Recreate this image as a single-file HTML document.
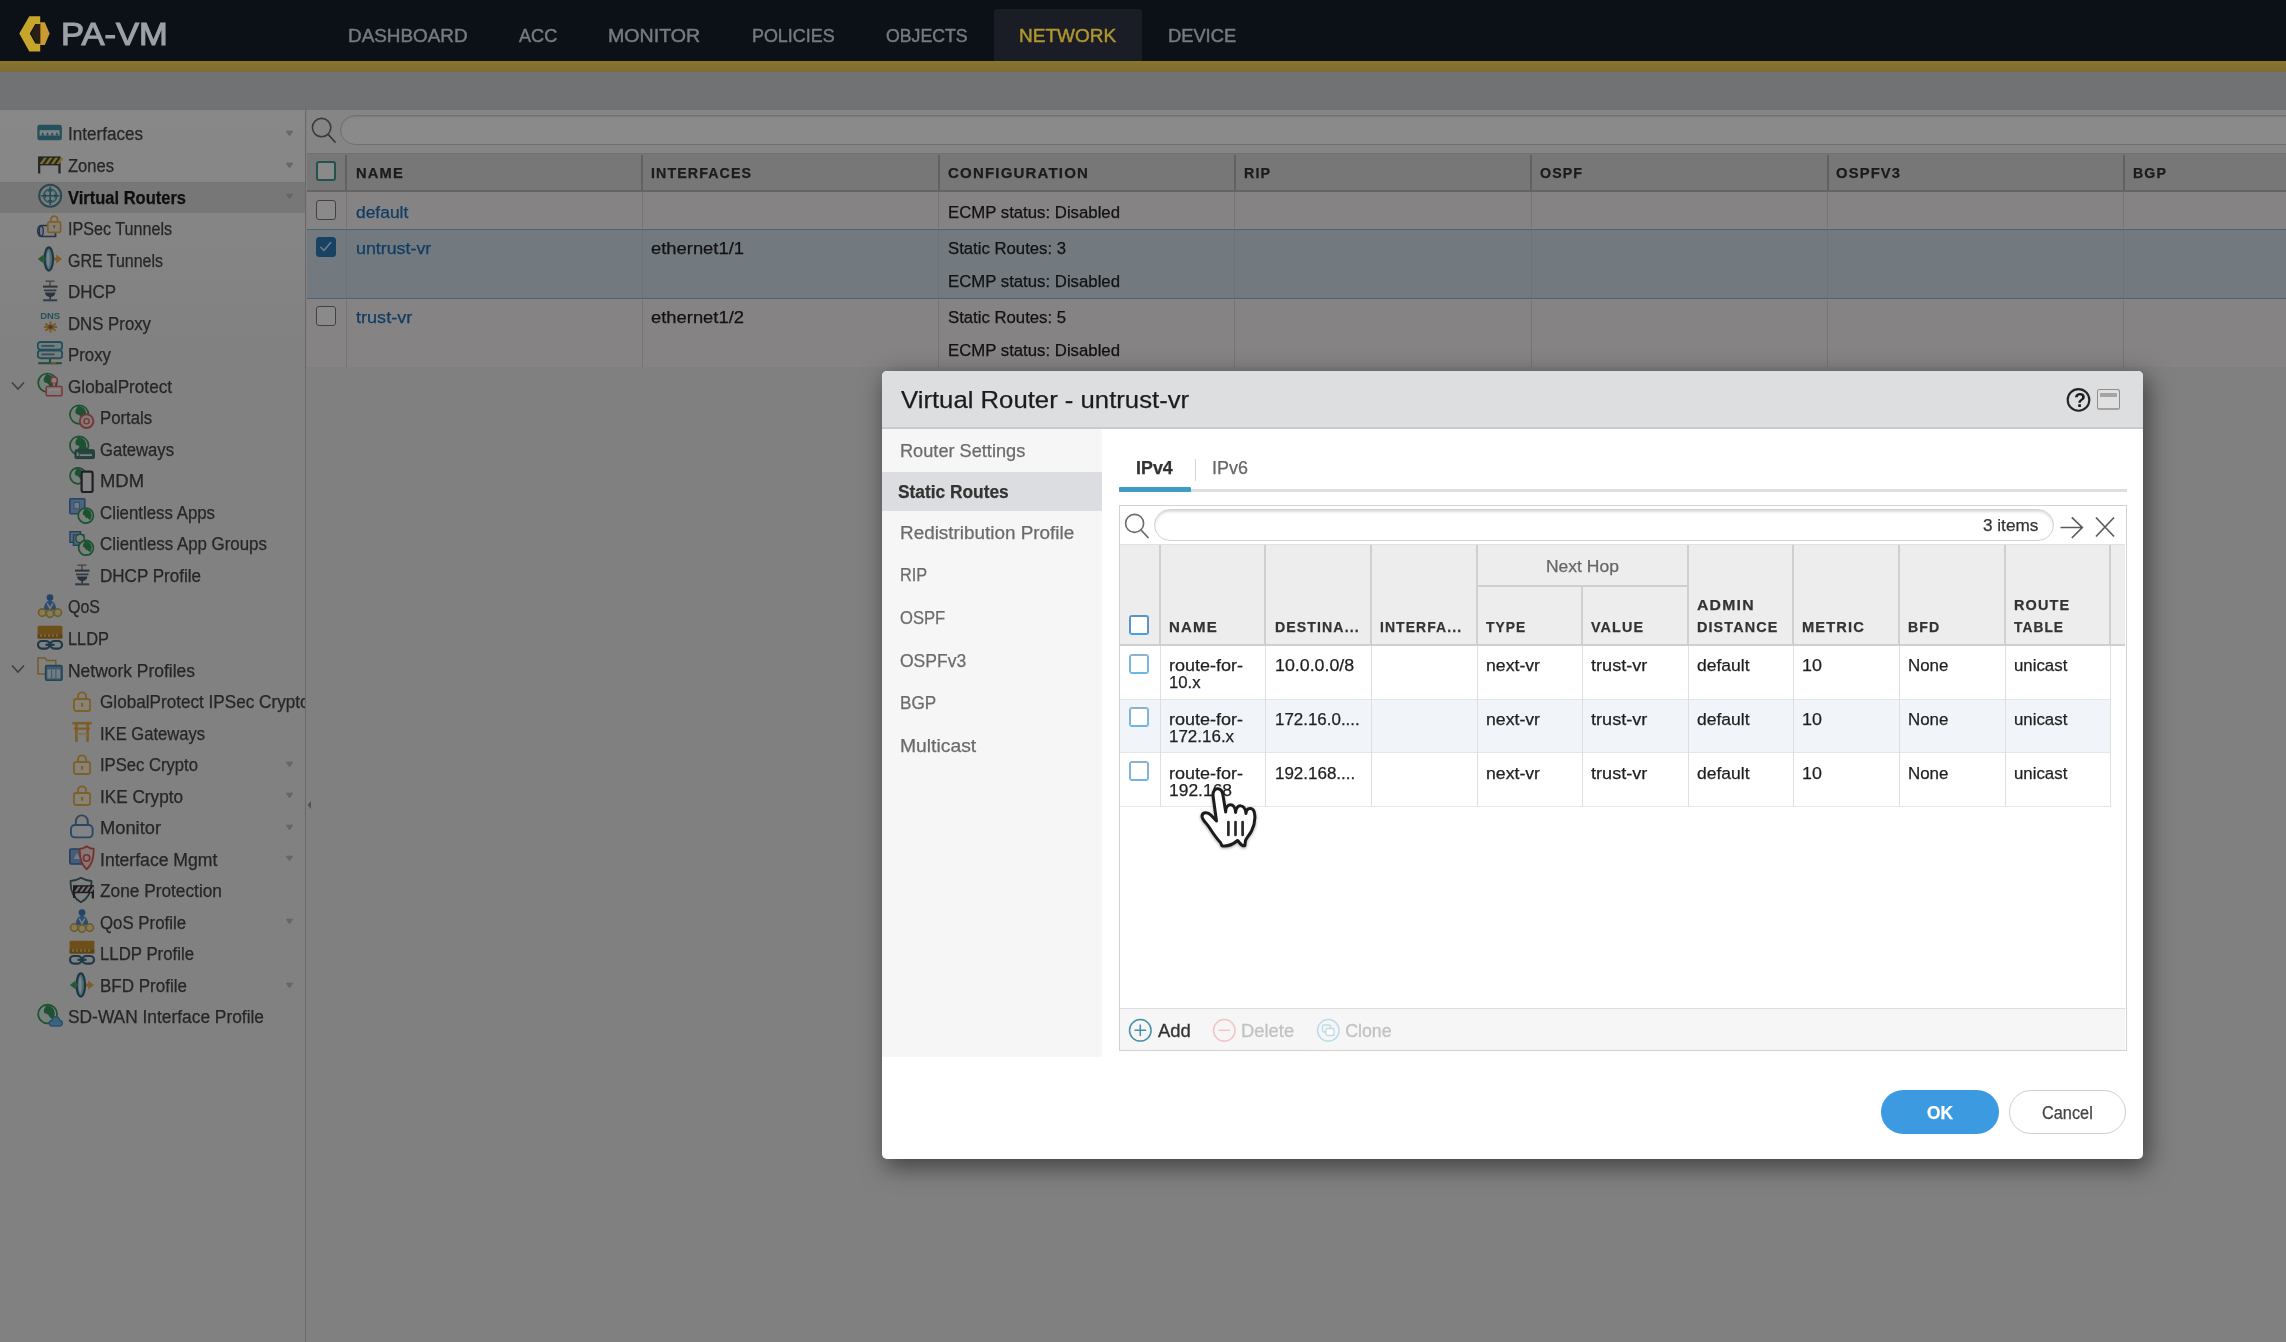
<!DOCTYPE html>
<html lang="en"><head><meta charset="utf-8"><title>PA-VM - Network - Virtual Routers</title>
<style>
html,body{margin:0;padding:0;}
body{width:2286px;height:1342px;overflow:hidden;position:relative;background:#ececec;font-family:"Liberation Sans", Arial, sans-serif;}
.layer{position:absolute;left:0;top:0;width:2286px;height:1342px;overflow:hidden;will-change:transform;}
.layer div,.layer span.cb,.layer svg{position:absolute;box-sizing:border-box;}
.t{position:absolute;white-space:nowrap;line-height:1;transform-origin:0 0;-webkit-text-stroke:0.25px;}
#sidewrap{width:305px;}
.cb{display:block;width:20px;height:20px;border-radius:3px;background:#fff;}
.cb-m{border:1.5px solid #7a7a7a;}
.cb-mh{border:2px solid #3f9a8c;}
.cb-mc{background:#2b7bb9;border:1.5px solid #2b7bb9;}
.cb-d{border:2px solid #7fb4dc;border-top-color:#8fb1cc;border-bottom-color:#6cb5e6;}
.cb-dh{border:2px solid #5b94c6;border-bottom-color:#4aa0e0;}
#mask{background:rgba(0,0,0,0.46);top:72px;height:1270px;}
</style></head>
<body>
<div class="layer" id="app">
<header>
<div style="left:0.0px;top:0.0px;width:2286.0px;height:61.0px;background:#0c1117;"></div>
<div style="left:993.6px;top:8.5px;width:148.0px;height:52.5px;background:#1a1d25;border-radius:3px 3px 0 0;"></div>
<div style="left:0.0px;top:61.0px;width:2286.0px;height:11.5px;background:linear-gradient(to bottom,#8a752c,#7c6c36);"></div>
<svg style="left:17px;top:13px" width="36" height="42" viewBox="17 13 36 42"><path d="M29.300 16.200H40.200V24H35.300L29.800 33.600 35.300 43.400H40.200V51.400H29.300L19.300 33.600z" fill="#c6a62a"/><path d="M40.200 22.200L44.800 22.200 49.600 33.600 44.800 45 40.200 45z" fill="#c99a32"/><path d="M40.200 24H36.500L31.200 33.600 36.500 43.400H40.200z" fill="#2a1f14"/></svg>
<span class="t" style="left:60.5px;top:18.7px;font-size:30.6px;color:#9da1a6;transform:scaleX(1.129);-webkit-text-stroke:1.1px #9da1a6;">PA-VM</span>
<span class="t" style="left:348.0px;top:27.4px;font-size:18.6px;color:#757b82;transform:scaleX(1.015);-webkit-text-stroke:0.45px;">DASHBOARD</span>
<span class="t" style="left:519.0px;top:27.4px;font-size:18.6px;color:#757b82;transform:scaleX(0.975);-webkit-text-stroke:0.45px;">ACC</span>
<span class="t" style="left:608.3px;top:27.4px;font-size:18.6px;color:#757b82;transform:scaleX(1.055);-webkit-text-stroke:0.45px;">MONITOR</span>
<span class="t" style="left:752.0px;top:27.4px;font-size:18.6px;color:#757b82;transform:scaleX(0.963);-webkit-text-stroke:0.45px;">POLICIES</span>
<span class="t" style="left:885.7px;top:27.4px;font-size:18.6px;color:#757b82;transform:scaleX(0.951);-webkit-text-stroke:0.45px;">OBJECTS</span>
<span class="t" style="left:1019.4px;top:27.4px;font-size:18.6px;color:#b0972e;transform:scaleX(1.022);-webkit-text-stroke:0.45px;">NETWORK</span>
<span class="t" style="left:1167.9px;top:27.4px;font-size:18.6px;color:#757b82;transform:scaleX(0.984);-webkit-text-stroke:0.45px;">DEVICE</span>
</header>
<div style="left:0.0px;top:72.0px;width:2286.0px;height:37.5px;background:#d0d3d6;"></div>
<nav class="layer" id="sidewrap">
<div style="left:0.0px;top:109.5px;width:305.0px;height:1232.5px;background:linear-gradient(to bottom,#fbfbfb 0px,#f9f9f9 70px,#efefef 230px,#eeeeee 260px);"></div>
<div style="left:0.0px;top:182.0px;width:305.0px;height:30.5px;background:#dcdcdc;"></div>
<svg style="left:37.0px;top:120.0px" width="26" height="26" viewBox="0 0 26 26" opacity="0.88"><rect x="0.3" y="4.8" width="24.6" height="15.4" rx="2.2" fill="#2b879d"/><rect x="2.6" y="10.2" width="20" height="5.4" fill="#e6f4f7"/><path d="M4.2 15.6l1.6-3.6 1.6 3.6z" fill="#2b879d"/><path d="M8.9 15.6l1.6-3.6 1.6 3.6z" fill="#2b879d"/><path d="M13.6 15.6l1.6-3.6 1.6 3.6z" fill="#2b879d"/><path d="M18.3 15.6l1.6-3.6 1.6 3.6z" fill="#2b879d"/></svg>
<svg style="left:284.500px;top:130.0px" width="9" height="7" viewBox="0 0 9 7"><path d="M1.300 1.200h6.400l-3.200 4.600z" fill="#bdbdbd" stroke="#bdbdbd" stroke-width="1" stroke-linejoin="round"/></svg>
<svg style="left:37.0px;top:151.5px" width="26" height="26" viewBox="0 0 26 26" opacity="0.88"><rect x="1" y="4.4" width="22.6" height="9" fill="#2e2e2e"/><path d="M2.5 12l4.5-6.2h3l-4.5 6.2z" fill="#e6c93a"/><path d="M8.1 12l4.5-6.2h3l-4.5 6.2z" fill="#e6c93a"/><path d="M13.7 12l4.5-6.2h3l-4.5 6.2z" fill="#e6c93a"/><path d="M19.3 12l4.5-6.2h3l-4.5 6.2z" fill="#e6c93a"/><rect x="1" y="13" width="2.3" height="8.5" fill="#2e2e2e"/><rect x="21.3" y="13" width="2.3" height="8.5" fill="#2e2e2e"/></svg>
<svg style="left:284.500px;top:161.5px" width="9" height="7" viewBox="0 0 9 7"><path d="M1.300 1.200h6.400l-3.200 4.600z" fill="#bdbdbd" stroke="#bdbdbd" stroke-width="1" stroke-linejoin="round"/></svg>
<svg style="left:37.0px;top:183.1px" width="26" height="26" viewBox="0 0 26 26" opacity="0.88"><circle cx="13.2" cy="12.8" r="11" fill="#dbe9ec" stroke="#3b7886" stroke-width="2"/><circle cx="13.2" cy="12.8" r="6.6" fill="none" stroke="#3b8c9c" stroke-width="1.4"/><path d="M13.2 3.5v18.6M3.9 12.8h18.6" stroke="#2f7f90" stroke-width="1.6"/><path d="M13.2 5.2l-2.4 3.4h4.8zM13.2 20.4l-2.4-3.4h4.8zM5.6 12.8l3.4-2.4v4.8zM20.8 12.8l-3.4-2.4v4.8z" fill="#2f7f90"/></svg>
<svg style="left:284.500px;top:193.1px" width="9" height="7" viewBox="0 0 9 7"><path d="M1.300 1.200h6.400l-3.200 4.600z" fill="#bdbdbd" stroke="#bdbdbd" stroke-width="1" stroke-linejoin="round"/></svg>
<svg style="left:37.0px;top:214.6px" width="26" height="26" viewBox="0 0 26 26" opacity="0.88"><path d="M4 10.5h14.5v11H4a3.2 5.5 0 0 1 0-11z" fill="#e9eef5" stroke="#2d4d78" stroke-width="1.7"/><ellipse cx="4.3" cy="16" rx="2" ry="5" fill="#cfd9e8" stroke="#2d4d78" stroke-width="1.3"/><path d="M13.8 7.2v-2.6a3.4 3.4 0 0 1 6.8 0v2.6" fill="none" stroke="#e8a92e" stroke-width="1.7"/><rect x="10.8" y="6.8" width="12.8" height="10.6" rx="1.8" fill="#f7ecd0" stroke="#e8a92e" stroke-width="1.7"/><path d="M16 10.2h2.4l-1.2 4z" fill="#c07b2a"/></svg>
<svg style="left:37.0px;top:246.1px" width="26" height="26" viewBox="0 0 26 26" opacity="0.88"><ellipse cx="11.8" cy="13" rx="4.2" ry="11.6" fill="#8cc8e0" stroke="#1f5668" stroke-width="2.2"/><ellipse cx="11.2" cy="13" rx="1.3" ry="8.2" fill="#e4f3f8"/><path d="M0.8 13l5.8-4.6v3.2h2v2.8h-2v3.2z" fill="#2c9a52"/><path d="M25 13l-5.8-4.6v3.2h-2.2v2.8h2.2v3.2z" fill="#e9a23b"/></svg>
<svg style="left:37.0px;top:277.7px" width="26" height="26" viewBox="0 0 26 26" opacity="0.88"><path d="M8.5 3.2h9M13 3.2v5.2" stroke="#666" stroke-width="1.3"/><path d="M6 8.6h14.5" stroke="#4a4a4a" stroke-width="2"/><path d="M7 12.4h12.4" stroke="#3f5f80" stroke-width="1.8"/><path d="M8 14.6h10.4a5.2 4.4 0 0 1 -10.4 0z" fill="#3a4a5c"/><path d="M13.2 18.5v3" stroke="#444" stroke-width="1.6"/><path d="M6.2 22.3h14" stroke="#3f5f80" stroke-width="2"/></svg>
<svg style="left:37.0px;top:309.2px" width="26" height="26" viewBox="0 0 26 26" opacity="0.88"><text x="3.2" y="10.2" font-family="Liberation Sans,sans-serif" font-size="9.5" font-weight="700" fill="#2b8a99" textLength="20" lengthAdjust="spacingAndGlyphs">DNS</text><path d="M13.5 12.4v11M8.3 14.6l10.4 7M18.7 14.6l-10.4 7M7 18h13" stroke="#dd9a3c" stroke-width="1.9"/><circle cx="13.5" cy="18" r="2.1" fill="#8a5a2c"/></svg>
<svg style="left:37.0px;top:340.8px" width="26" height="26" viewBox="0 0 26 26" opacity="0.88"><rect x="0.8" y="1" width="24.4" height="7.6" rx="2.6" fill="#d4e6ea" stroke="#2b879d" stroke-width="1.9"/><rect x="0.8" y="9.6" width="24.4" height="7.6" rx="2.6" fill="#d4e6ea" stroke="#2b879d" stroke-width="1.9"/><path d="M4.5 4.8h13M4.5 13.4h13" stroke="#5d7f88" stroke-width="1.8"/><path d="M13 17.4v3.6" stroke="#2a7c60" stroke-width="2"/><path d="M1.2 22.2h23.6" stroke="#2a8a66" stroke-width="2.2"/><path d="M14 22.2h5" stroke="#c79a3a" stroke-width="2.2"/></svg>
<svg style="left:37.0px;top:372.3px" width="26" height="26" viewBox="0 0 26 26" opacity="0.88"><circle cx="10.5" cy="10.8" r="9.3" fill="#dff0e5" stroke="#1e8a4a" stroke-width="1.7"/><path d="M9.1 2.0c8.4 0.9 10.2 8.4 7.0 14.0c-4.7 -0.9 -3.7 -5.6 -8.4 -5.6c-2.8 -3.7 0.9 -5.6 1.4 -8.4z" fill="#1e8a4a"/><circle cx="17" cy="8.2" r="3.3" fill="#fbeeee" stroke="#d9534f" stroke-width="1.5"/><path d="M15.6 11.4v3.2h2.8v-3.2" fill="#fbeeee" stroke="#d9534f" stroke-width="1.2"/><rect x="9.2" y="14.4" width="15.8" height="9.4" rx="1.2" fill="#f6e3e3" stroke="#d9534f" stroke-width="1.5"/><path d="M11.5 17.6h11" stroke="#fff" stroke-width="1.6"/></svg>
<svg style="left:68.5px;top:403.8px" width="26" height="26" viewBox="0 0 26 26" opacity="0.88"><circle cx="10.2" cy="10.6" r="9.3" fill="#dff0e5" stroke="#1e8a4a" stroke-width="1.7"/><path d="M8.8 1.8c8.4 0.9 10.2 8.4 7.0 14.0c-4.7 -0.9 -3.7 -5.6 -8.4 -5.6c-2.8 -3.7 0.9 -5.6 1.4 -8.4z" fill="#1e8a4a"/><circle cx="17.6" cy="17.2" r="6.8" fill="#f8dedd" stroke="#d9534f" stroke-width="1.9"/><circle cx="17.6" cy="17.2" r="2.6" fill="none" stroke="#d9534f" stroke-width="1.4"/></svg>
<svg style="left:68.5px;top:435.4px" width="26" height="26" viewBox="0 0 26 26" opacity="0.88"><circle cx="10.2" cy="10.6" r="9.3" fill="#dff0e5" stroke="#1e8a4a" stroke-width="1.7"/><path d="M8.8 1.8c8.4 0.9 10.2 8.4 7.0 14.0c-4.7 -0.9 -3.7 -5.6 -8.4 -5.6c-2.8 -3.7 0.9 -5.6 1.4 -8.4z" fill="#1e8a4a"/><path d="M8.5 14.5c1-4.5 8.5-5.5 10.5 0z" fill="#1e8a4a"/><rect x="6" y="14.8" width="19.4" height="8.8" rx="1.3" fill="#2f6f66" stroke="#245a54" stroke-width="1"/><path d="M8.6 17.4v3.6M10.6 20.2h12.4" stroke="#e6f2f0" stroke-width="1.8"/></svg>
<svg style="left:68.5px;top:466.9px" width="26" height="26" viewBox="0 0 26 26" opacity="0.88"><circle cx="9" cy="8.8" r="8" fill="#dff0e5" stroke="#1e8a4a" stroke-width="1.7"/><path d="M7.8 1.2c7.2 0.8 8.8 7.2 6.0 12.0c-4.0 -0.8 -3.2 -4.8 -7.2 -4.8c-2.4 -3.2 0.8 -4.8 1.2 -7.2z" fill="#1e8a4a"/><rect x="12.6" y="4.6" width="11" height="20.4" rx="1.8" fill="#f4f4f6" stroke="#23232b" stroke-width="2.2"/></svg>
<svg style="left:68.5px;top:498.4px" width="26" height="26" viewBox="0 0 26 26" opacity="0.88"><rect x="0.8" y="0.8" width="15" height="15" rx="1" fill="#7fb0e6" stroke="#2f6fb3" stroke-width="1.6"/><rect x="5" y="4.4" width="5.4" height="6.4" fill="#cfe2f7" stroke="#4b86c8" stroke-width="1"/><circle cx="16.8" cy="17.6" r="7.6" fill="#dff0e5" stroke="#1e8a4a" stroke-width="1.7"/><path d="M15.7 10.4c6.8 0.8 8.4 6.8 5.7 11.4c-3.8 -0.8 -3.0 -4.6 -6.8 -4.6c-2.3 -3.0 0.8 -4.6 1.1 -6.8z" fill="#1e8a4a"/><path d="M14.5 15.5l2.8 5 3.4-3.4" fill="#1e8a4a"/></svg>
<svg style="left:68.5px;top:530.0px" width="26" height="26" viewBox="0 0 26 26" opacity="0.88"><rect x="1" y="1.8" width="10.5" height="10.5" fill="#9cc2ea" stroke="#2d5f94" stroke-width="1.4"/><rect x="4.4" y="4.8" width="10.5" height="10.5" fill="#7fb0e6" stroke="#2f6fb3" stroke-width="1.4"/><circle cx="11" cy="8.5" r="4.2" fill="#dff0e5" stroke="#1e8a4a" stroke-width="1.4"/><circle cx="17" cy="17.8" r="7.4" fill="#dff0e5" stroke="#1e8a4a" stroke-width="1.7"/><path d="M15.9 10.8c6.7 0.7 8.1 6.7 5.6 11.1c-3.7 -0.7 -3.0 -4.4 -6.7 -4.4c-2.2 -3.0 0.7 -4.4 1.1 -6.7z" fill="#1e8a4a"/><path d="M14.8 15.6l2.6 5 3.4-3.4" fill="#1e8a4a"/></svg>
<svg style="left:68.5px;top:561.5px" width="26" height="26" viewBox="0 0 26 26" opacity="0.88"><path d="M8.5 3.2h9M13 3.2v5.2" stroke="#666" stroke-width="1.3"/><path d="M6 8.6h14.5" stroke="#4a4a4a" stroke-width="2"/><path d="M7 12.4h12.4" stroke="#3f5f80" stroke-width="1.8"/><path d="M8 14.6h10.4a5.2 4.4 0 0 1 -10.4 0z" fill="#3a4a5c"/><path d="M13.2 18.5v3" stroke="#444" stroke-width="1.6"/><path d="M6.2 22.3h14" stroke="#3f5f80" stroke-width="2"/></svg>
<svg style="left:37.0px;top:593.0px" width="26" height="26" viewBox="0 0 26 26" opacity="0.88"><circle cx="13" cy="4.6" r="3.4" fill="#2a6fb5"/><path d="M6.8 17c0-5.4 2.6-9.2 6.2-9.2s6.2 3.8 6.2 9.2z" fill="#3d82c9"/><path d="M10.2 10.4l2.8 5 2.8-5" fill="none" stroke="#d9e8f6" stroke-width="1.5"/><circle cx="5.2" cy="19.6" r="3.7" fill="#f1e6b8" stroke="#c9a227" stroke-width="1.7"/><circle cx="13" cy="20.6" r="3.7" fill="#f1e6b8" stroke="#c9a227" stroke-width="1.7"/><circle cx="20.8" cy="19.6" r="3.7" fill="#f1e6b8" stroke="#c9a227" stroke-width="1.7"/></svg>
<svg style="left:37.0px;top:624.6px" width="26" height="26" viewBox="0 0 26 26" opacity="0.88"><rect x="0.6" y="0.8" width="24.8" height="12.6" rx="1.4" fill="#c88714"/><path d="M0.6 9.6h24.8v3.8h-24.8z" fill="#a8700f"/><path d="M4 9.2v2.6M8 9.2v2.6M12 9.2v2.6M16 9.2v2.6M20 9.2v2.6" stroke="#e9c98a" stroke-width="1.5"/><rect x="1" y="16" width="11.6" height="7.6" rx="3.8" fill="none" stroke="#1f5a7a" stroke-width="2.2"/><rect x="13.4" y="16" width="11.6" height="7.6" rx="3.8" fill="none" stroke="#1f5a7a" stroke-width="2.2"/><path d="M8.5 19.8h9" stroke="#1f5a7a" stroke-width="2.2"/></svg>
<svg style="left:37.0px;top:656.1px" width="26" height="26" viewBox="0 0 26 26" opacity="0.88"><path d="M1 2h7l2 2.6h8.8v13.4h-17.8z" fill="#f7f0dc" stroke="#c9a04a" stroke-width="1.5"/><rect x="8.6" y="9.6" width="16.4" height="14.6" rx="1.2" fill="#5f9fc4" stroke="#2d6f94" stroke-width="1.6"/><rect x="10.4" y="13.4" width="12.8" height="9" fill="#d7e8f2"/><path d="M14.6 13.4v9M18.9 13.4v9" stroke="#5f9fc4" stroke-width="1.2"/></svg>
<svg style="left:68.5px;top:687.6px" width="26" height="26" viewBox="0 0 26 26" opacity="0.88"><path d="M9 11.5v-3.2a4 4 0 0 1 8 0v3.2" fill="none" stroke="#e8a92e" stroke-width="1.8"/><rect x="5" y="11.0" width="16" height="12" rx="2" fill="#fbf3de" stroke="#e8a92e" stroke-width="1.8"/><rect x="12" y="15.0" width="2.2" height="3.6" fill="#e8a92e"/></svg>
<svg style="left:68.5px;top:719.2px" width="26" height="26" viewBox="0 0 26 26" opacity="0.88"><path d="M3.4 4.2h19.2" stroke="#e8a32c" stroke-width="2.6"/><path d="M5 9.6h16" stroke="#e8a32c" stroke-width="2.2"/><path d="M7.4 4.2v18.6M18.6 4.2v18.6" stroke="#e8a32c" stroke-width="2.6"/><path d="M7.4 15h11.2" stroke="#f3c878" stroke-width="1.6"/></svg>
<svg style="left:68.5px;top:750.7px" width="26" height="26" viewBox="0 0 26 26" opacity="0.88"><path d="M9 11.5v-3.2a4 4 0 0 1 8 0v3.2" fill="none" stroke="#e8a92e" stroke-width="1.8"/><rect x="5" y="11.0" width="16" height="12" rx="2" fill="#fbf3de" stroke="#e8a92e" stroke-width="1.8"/><rect x="12" y="15.0" width="2.2" height="3.6" fill="#e8a92e"/></svg>
<svg style="left:284.500px;top:760.7px" width="9" height="7" viewBox="0 0 9 7"><path d="M1.300 1.200h6.400l-3.200 4.600z" fill="#bdbdbd" stroke="#bdbdbd" stroke-width="1" stroke-linejoin="round"/></svg>
<svg style="left:68.5px;top:782.2px" width="26" height="26" viewBox="0 0 26 26" opacity="0.88"><path d="M9 11.5v-3.2a4 4 0 0 1 8 0v3.2" fill="none" stroke="#e8a92e" stroke-width="1.8"/><rect x="5" y="11.0" width="16" height="12" rx="2" fill="#fbf3de" stroke="#e8a92e" stroke-width="1.8"/><rect x="12" y="15.0" width="2.2" height="3.6" fill="#e8a92e"/></svg>
<svg style="left:284.500px;top:792.2px" width="9" height="7" viewBox="0 0 9 7"><path d="M1.300 1.200h6.400l-3.200 4.600z" fill="#bdbdbd" stroke="#bdbdbd" stroke-width="1" stroke-linejoin="round"/></svg>
<svg style="left:68.5px;top:813.8px" width="26" height="26" viewBox="0 0 26 26" opacity="0.88"><path d="M6.8 11.6v-4.2a6 6 0 0 1 12 0v4.2" fill="none" stroke="#4a6f9a" stroke-width="1.9"/><rect x="2" y="11" width="21.6" height="12.4" rx="4" fill="#eef3f8" stroke="#3a78b5" stroke-width="1.9"/></svg>
<svg style="left:284.500px;top:823.8px" width="9" height="7" viewBox="0 0 9 7"><path d="M1.300 1.200h6.400l-3.200 4.600z" fill="#bdbdbd" stroke="#bdbdbd" stroke-width="1" stroke-linejoin="round"/></svg>
<svg style="left:68.5px;top:845.3px" width="26" height="26" viewBox="0 0 26 26" opacity="0.88"><rect x="0.8" y="4" width="15.6" height="15" rx="1.6" fill="#6fa3dc" stroke="#2d63a6" stroke-width="1.6"/><path d="M4.8 14l3.2-6 3.2 6z" fill="#dbe9f7"/><path d="M17.6 1.2c2.6 1.8 4.6 2.4 7 2.6c0.4 9-1.6 16-7 20.4c-5.2-4.4-7.2-11.4-6.8-20.4c2.2-0.2 4.4-0.8 6.800-2.600z" fill="#f7dcdc" stroke="#d9433f" stroke-width="1.8"/><circle cx="17.6" cy="13" r="3.2" fill="none" stroke="#d9433f" stroke-width="1.6"/></svg>
<svg style="left:284.500px;top:855.3px" width="9" height="7" viewBox="0 0 9 7"><path d="M1.300 1.200h6.400l-3.200 4.600z" fill="#bdbdbd" stroke="#bdbdbd" stroke-width="1" stroke-linejoin="round"/></svg>
<svg style="left:68.5px;top:876.9px" width="26" height="26" viewBox="0 0 26 26" opacity="0.88"><path d="M12 0.8c3.6 2.2 6.8 3 10.4 3.200c0.400 9.600-2.400 17-10.400 21.200c-8-4.200-10.800-11.600-10.400-21.200c3.600-0.200 6.800-1 10.400-3.200z" fill="#e8eef0" stroke="#2f4f55" stroke-width="1.8"/><rect x="4" y="8.200" width="21" height="8" fill="#1d1d1d"/><path d="M5.5 14.8l3.6-5.2h2.6l-3.6 5.2z" fill="#cfcfcf"/><path d="M10.5 14.8l3.6-5.2h2.6l-3.6 5.2z" fill="#cfcfcf"/><path d="M15.5 14.8l3.6-5.2h2.6l-3.6 5.2z" fill="#cfcfcf"/><path d="M20.5 14.8l3.6-5.2h2.6l-3.6 5.2z" fill="#cfcfcf"/><rect x="4" y="16" width="2.200" height="5" fill="#1d1d1d"/><rect x="22.8" y="16" width="2.200" height="5.500" fill="#1d1d1d"/></svg>
<svg style="left:68.5px;top:908.4px" width="26" height="26" viewBox="0 0 26 26" opacity="0.88"><circle cx="13" cy="4.6" r="3.4" fill="#2a6fb5"/><path d="M6.8 17c0-5.4 2.6-9.2 6.2-9.2s6.2 3.8 6.2 9.2z" fill="#3d82c9"/><path d="M10.2 10.4l2.8 5 2.8-5" fill="none" stroke="#d9e8f6" stroke-width="1.5"/><circle cx="5.2" cy="19.6" r="3.7" fill="#f1e6b8" stroke="#c9a227" stroke-width="1.7"/><circle cx="13" cy="20.6" r="3.7" fill="#f1e6b8" stroke="#c9a227" stroke-width="1.7"/><circle cx="20.8" cy="19.6" r="3.7" fill="#f1e6b8" stroke="#c9a227" stroke-width="1.7"/></svg>
<svg style="left:284.500px;top:918.4px" width="9" height="7" viewBox="0 0 9 7"><path d="M1.300 1.200h6.400l-3.200 4.600z" fill="#bdbdbd" stroke="#bdbdbd" stroke-width="1" stroke-linejoin="round"/></svg>
<svg style="left:68.5px;top:939.9px" width="26" height="26" viewBox="0 0 26 26" opacity="0.88"><rect x="0.6" y="0.8" width="24.8" height="12.6" rx="1.4" fill="#c88714"/><path d="M0.6 9.6h24.8v3.8h-24.8z" fill="#a8700f"/><path d="M4 9.2v2.6M8 9.2v2.6M12 9.2v2.6M16 9.2v2.6M20 9.2v2.6" stroke="#e9c98a" stroke-width="1.5"/><rect x="1" y="16" width="11.6" height="7.6" rx="3.8" fill="none" stroke="#1f5a7a" stroke-width="2.2"/><rect x="13.4" y="16" width="11.6" height="7.6" rx="3.8" fill="none" stroke="#1f5a7a" stroke-width="2.2"/><path d="M8.5 19.8h9" stroke="#1f5a7a" stroke-width="2.2"/></svg>
<svg style="left:68.5px;top:971.5px" width="26" height="26" viewBox="0 0 26 26" opacity="0.88"><ellipse cx="11.8" cy="13" rx="4.2" ry="11.6" fill="#8cc8e0" stroke="#1f5668" stroke-width="2.2"/><ellipse cx="11.2" cy="13" rx="1.3" ry="8.2" fill="#e4f3f8"/><path d="M0.8 13l5.8-4.6v3.2h2v2.8h-2v3.2z" fill="#2c9a52"/><path d="M25 13l-5.8-4.6v3.2h-2.2v2.8h2.2v3.2z" fill="#e9a23b"/></svg>
<svg style="left:284.500px;top:981.5px" width="9" height="7" viewBox="0 0 9 7"><path d="M1.300 1.200h6.400l-3.200 4.600z" fill="#bdbdbd" stroke="#bdbdbd" stroke-width="1" stroke-linejoin="round"/></svg>
<svg style="left:37.0px;top:1003.0px" width="26" height="26" viewBox="0 0 26 26" opacity="0.88"><circle cx="10.6" cy="11" r="9.4" fill="#dff0e5" stroke="#1e8a4a" stroke-width="1.7"/><path d="M9.2 2.1c8.5 0.9 10.3 8.5 7.1 14.1c-4.7 -0.9 -3.8 -5.6 -8.5 -5.6c-2.8 -3.8 0.9 -5.6 1.4 -8.5z" fill="#1e8a4a"/><path d="M15 17.500a3.800 3.800 0 0 1 7.600 0a2.800 2.800 0 0 1 0 5.600h-7.600a2.800 2.800 0 0 1 0-5.600z" fill="#5fb0e0" stroke="#2f86c0" stroke-width="1.400"/></svg>
<svg style="left:10px;top:379.5px" width="16" height="12" viewBox="0 0 16 12"><path d="M2 2.5l6 6.5 6-6.5" fill="none" stroke="#777" stroke-width="1.6"/></svg>
<svg style="left:10px;top:663.0px" width="16" height="12" viewBox="0 0 16 12"><path d="M2 2.5l6 6.5 6-6.5" fill="none" stroke="#777" stroke-width="1.6"/></svg>
<span class="t" style="left:68.0px;top:126.4px;font-size:17.6px;color:#464646;transform:scaleX(0.971);">Interfaces</span>
<span class="t" style="left:68.0px;top:157.9px;font-size:17.6px;color:#464646;transform:scaleX(0.941);">Zones</span>
<span class="t" style="left:68.0px;top:189.5px;font-size:17.6px;color:#1a1a1a;font-weight:700;transform:scaleX(0.938);">Virtual Routers</span>
<span class="t" style="left:68.0px;top:221.0px;font-size:17.6px;color:#464646;transform:scaleX(0.917);">IPSec Tunnels</span>
<span class="t" style="left:68.0px;top:252.5px;font-size:17.6px;color:#464646;transform:scaleX(0.908);">GRE Tunnels</span>
<span class="t" style="left:68.0px;top:284.1px;font-size:17.6px;color:#464646;transform:scaleX(0.963);">DHCP</span>
<span class="t" style="left:68.0px;top:315.6px;font-size:17.6px;color:#464646;transform:scaleX(0.954);">DNS Proxy</span>
<span class="t" style="left:68.0px;top:347.2px;font-size:17.6px;color:#464646;transform:scaleX(0.956);">Proxy</span>
<span class="t" style="left:68.0px;top:378.7px;font-size:17.6px;color:#464646;transform:scaleX(0.976);">GlobalProtect</span>
<span class="t" style="left:100.0px;top:410.2px;font-size:17.6px;color:#464646;transform:scaleX(0.950);">Portals</span>
<span class="t" style="left:100.0px;top:441.8px;font-size:17.6px;color:#464646;transform:scaleX(0.946);">Gateways</span>
<span class="t" style="left:100.0px;top:473.3px;font-size:17.6px;color:#464646;transform:scaleX(1.047);">MDM</span>
<span class="t" style="left:100.0px;top:504.8px;font-size:17.6px;color:#464646;transform:scaleX(0.956);">Clientless Apps</span>
<span class="t" style="left:100.0px;top:536.4px;font-size:17.6px;color:#464646;transform:scaleX(0.959);">Clientless App Groups</span>
<span class="t" style="left:100.0px;top:567.9px;font-size:17.6px;color:#464646;transform:scaleX(0.968);">DHCP Profile</span>
<span class="t" style="left:68.0px;top:599.4px;font-size:17.6px;color:#464646;transform:scaleX(0.909);">QoS</span>
<span class="t" style="left:68.0px;top:631.0px;font-size:17.6px;color:#464646;transform:scaleX(0.931);">LLDP</span>
<span class="t" style="left:68.0px;top:662.5px;font-size:17.6px;color:#464646;transform:scaleX(0.991);">Network Profiles</span>
<span class="t" style="left:100.0px;top:694.0px;font-size:17.6px;color:#464646;transform:scaleX(0.974);">GlobalProtect IPSec Crypto</span>
<span class="t" style="left:100.0px;top:725.6px;font-size:17.6px;color:#464646;transform:scaleX(0.942);">IKE Gateways</span>
<span class="t" style="left:100.0px;top:757.1px;font-size:17.6px;color:#464646;transform:scaleX(0.945);">IPSec Crypto</span>
<span class="t" style="left:100.0px;top:788.7px;font-size:17.6px;color:#464646;transform:scaleX(0.976);">IKE Crypto</span>
<span class="t" style="left:100.0px;top:820.2px;font-size:17.6px;color:#464646;transform:scaleX(1.040);">Monitor</span>
<span class="t" style="left:100.0px;top:851.7px;font-size:17.6px;color:#464646;">Interface Mgmt</span>
<span class="t" style="left:100.0px;top:883.3px;font-size:17.6px;color:#464646;transform:scaleX(0.982);">Zone Protection</span>
<span class="t" style="left:100.0px;top:914.8px;font-size:17.6px;color:#464646;transform:scaleX(0.956);">QoS Profile</span>
<span class="t" style="left:100.0px;top:946.3px;font-size:17.6px;color:#464646;transform:scaleX(0.955);">LLDP Profile</span>
<span class="t" style="left:100.0px;top:977.9px;font-size:17.6px;color:#464646;transform:scaleX(0.967);">BFD Profile</span>
<span class="t" style="left:68.0px;top:1009.4px;font-size:17.6px;color:#464646;transform:scaleX(0.986);">SD-WAN Interface Profile</span>
</nav>
<div style="left:305.0px;top:109.5px;width:1.0px;height:1232.5px;background:#c2c2c2;"></div>
<svg style="left:305px;top:799px" width="8" height="12" viewBox="0 0 8 12"><path d="M6 2L2.5 6 6 10z" fill="#9a9a9a"/></svg>
<main>
<div style="left:306.5px;top:109.5px;width:1979.5px;height:43.5px;background:#f8f6f7;"></div>
<svg style="left:309px;top:115px" width="30" height="30" viewBox="0 0 30 30"><circle cx="12.6" cy="12.6" r="9.2" fill="none" stroke="#6d6d6d" stroke-width="1.6"/><path d="M19.2 19.4L26 27" stroke="#6d6d6d" stroke-width="1.8" stroke-linecap="round"/></svg>
<div style="left:340.0px;top:115.0px;width:1990.0px;height:30.0px;background:#fff;border:1.5px solid #cfcfcf;border-radius:15px;box-shadow:inset 0 1px 2px rgba(0,0,0,.12);"></div>
<div style="left:306.5px;top:153.0px;width:1979.5px;height:39.0px;background:#dcdcdc;border-bottom:2px solid #b9b9b9;border-top:1px solid #d0d0d0;"></div>
<div style="left:345.0px;top:155.0px;width:2.0px;height:35.0px;background:#b4b4b4;"></div>
<div style="left:641.3px;top:155.0px;width:2.0px;height:35.0px;background:#b4b4b4;"></div>
<div style="left:937.6px;top:155.0px;width:2.0px;height:35.0px;background:#b4b4b4;"></div>
<div style="left:1233.9px;top:155.0px;width:2.0px;height:35.0px;background:#b4b4b4;"></div>
<div style="left:1530.2px;top:155.0px;width:2.0px;height:35.0px;background:#b4b4b4;"></div>
<div style="left:1826.5px;top:155.0px;width:2.0px;height:35.0px;background:#b4b4b4;"></div>
<div style="left:2122.8px;top:155.0px;width:2.0px;height:35.0px;background:#b4b4b4;"></div>
<div style="left:306.5px;top:192.0px;width:1979.5px;height:37.0px;background:#f5f3f4;"></div>
<div style="left:306.5px;top:228.5px;width:1979.5px;height:70.5px;background:#d2dfeb;border-top:1.5px solid #8db8d8;border-bottom:1.5px solid #8db8d8;"></div>
<div style="left:306.5px;top:299.0px;width:1979.5px;height:68.0px;background:#f5f3f4;"></div>
<div style="left:345.5px;top:192.0px;width:1.0px;height:36.0px;background:#d9d9d9;"></div>
<div style="left:345.5px;top:230.0px;width:1.0px;height:68.0px;background:#c6d3df;"></div>
<div style="left:345.5px;top:300.0px;width:1.0px;height:67.0px;background:#d9d9d9;"></div>
<div style="left:641.8px;top:192.0px;width:1.0px;height:36.0px;background:#d9d9d9;"></div>
<div style="left:641.8px;top:230.0px;width:1.0px;height:68.0px;background:#c6d3df;"></div>
<div style="left:641.8px;top:300.0px;width:1.0px;height:67.0px;background:#d9d9d9;"></div>
<div style="left:938.1px;top:192.0px;width:1.0px;height:36.0px;background:#d9d9d9;"></div>
<div style="left:938.1px;top:230.0px;width:1.0px;height:68.0px;background:#c6d3df;"></div>
<div style="left:938.1px;top:300.0px;width:1.0px;height:67.0px;background:#d9d9d9;"></div>
<div style="left:1234.4px;top:192.0px;width:1.0px;height:36.0px;background:#d9d9d9;"></div>
<div style="left:1234.4px;top:230.0px;width:1.0px;height:68.0px;background:#c6d3df;"></div>
<div style="left:1234.4px;top:300.0px;width:1.0px;height:67.0px;background:#d9d9d9;"></div>
<div style="left:1530.7px;top:192.0px;width:1.0px;height:36.0px;background:#d9d9d9;"></div>
<div style="left:1530.7px;top:230.0px;width:1.0px;height:68.0px;background:#c6d3df;"></div>
<div style="left:1530.7px;top:300.0px;width:1.0px;height:67.0px;background:#d9d9d9;"></div>
<div style="left:1827.0px;top:192.0px;width:1.0px;height:36.0px;background:#d9d9d9;"></div>
<div style="left:1827.0px;top:230.0px;width:1.0px;height:68.0px;background:#c6d3df;"></div>
<div style="left:1827.0px;top:300.0px;width:1.0px;height:67.0px;background:#d9d9d9;"></div>
<div style="left:2123.3px;top:192.0px;width:1.0px;height:36.0px;background:#d9d9d9;"></div>
<div style="left:2123.3px;top:230.0px;width:1.0px;height:68.0px;background:#c6d3df;"></div>
<div style="left:2123.3px;top:300.0px;width:1.0px;height:67.0px;background:#d9d9d9;"></div>
<span class="cb cb-mh" style="left:316.0px;top:160.5px"></span>
<span class="cb cb-m" style="left:316.0px;top:200.0px"></span>
<span class="cb cb-mc" style="left:316px;top:236.5px"><svg style="left:0;top:0" width="17" height="17" viewBox="0 0 20 20"><path d="M4 10.5l4.2 4.2L16.5 5" fill="none" stroke="#dfeaf5" stroke-width="1.8"/></svg></span>
<span class="cb cb-m" style="left:316.0px;top:305.5px"></span>
<span class="t" style="left:355.7px;top:165.3px;font-size:15.5px;color:#333;font-weight:700;letter-spacing:1.2px;transform:scaleX(0.950);">NAME</span>
<span class="t" style="left:651.0px;top:165.3px;font-size:15.5px;color:#333;font-weight:700;letter-spacing:1.2px;transform:scaleX(0.918);">INTERFACES</span>
<span class="t" style="left:948.0px;top:165.3px;font-size:15.5px;color:#333;font-weight:700;letter-spacing:1.2px;transform:scaleX(0.971);">CONFIGURATION</span>
<span class="t" style="left:1244.0px;top:165.3px;font-size:15.5px;color:#333;font-weight:700;letter-spacing:1.2px;transform:scaleX(0.920);">RIP</span>
<span class="t" style="left:1540.0px;top:165.3px;font-size:15.5px;color:#333;font-weight:700;letter-spacing:1.2px;transform:scaleX(0.917);">OSPF</span>
<span class="t" style="left:1836.0px;top:165.3px;font-size:15.5px;color:#333;font-weight:700;letter-spacing:1.2px;transform:scaleX(0.953);">OSPFV3</span>
<span class="t" style="left:2133.0px;top:165.3px;font-size:15.5px;color:#333;font-weight:700;letter-spacing:1.2px;transform:scaleX(0.917);">BGP</span>
<span class="t" style="left:355.7px;top:203.5px;font-size:17.2px;color:#1f6fb5;transform:scaleX(1.013);">default</span>
<span class="t" style="left:355.7px;top:239.5px;font-size:17.2px;color:#1f6fb5;transform:scaleX(1.037);">untrust-vr</span>
<span class="t" style="left:355.7px;top:309.0px;font-size:17.2px;color:#1f6fb5;transform:scaleX(1.053);">trust-vr</span>
<span class="t" style="left:651.0px;top:239.5px;font-size:17.2px;color:#222;transform:scaleX(1.069);">ethernet1/1</span>
<span class="t" style="left:651.0px;top:309.0px;font-size:17.2px;color:#222;transform:scaleX(1.069);">ethernet1/2</span>
<span class="t" style="left:948.0px;top:203.5px;font-size:17.2px;color:#222;transform:scaleX(0.975);">ECMP status: Disabled</span>
<span class="t" style="left:948.0px;top:239.5px;font-size:17.2px;color:#222;transform:scaleX(0.973);">Static Routes: 3</span>
<span class="t" style="left:948.0px;top:273.0px;font-size:17.2px;color:#222;transform:scaleX(0.975);">ECMP status: Disabled</span>
<span class="t" style="left:948.0px;top:309.0px;font-size:17.2px;color:#222;transform:scaleX(0.973);">Static Routes: 5</span>
<span class="t" style="left:948.0px;top:342.0px;font-size:17.2px;color:#222;transform:scaleX(0.975);">ECMP status: Disabled</span>
</main>
</div>
<div class="layer" id="mask"></div>
<div class="layer" id="dlg">
<div style="left:881.5px;top:371.0px;width:1261.0px;height:787.5px;background:#fff;border-radius:5px;box-shadow:4px 7px 24px 1px rgba(0,0,0,.5);"></div>
<div style="left:881.5px;top:371.0px;width:1261.0px;height:57.5px;background:#dddedf;border-radius:5px 5px 0 0;border-bottom:2px solid #c9cacb;"></div>
<svg style="left:2065px;top:386px" width="28" height="28" viewBox="0 0 28 28"><circle cx="13.500" cy="13.900" r="10.800" fill="none" stroke="#242424" stroke-width="2.100"/></svg>
<span class="t" style="left:2073.900px;top:391.300px;font-size:19.500px;font-weight:700;color:#1b1b1b;-webkit-text-stroke:0">?</span>
<div style="left:2096.8px;top:389.3px;width:23.4px;height:21.0px;background:#e0e0e1;border:1.8px solid #8e8e8e;border-bottom:2.6px solid #a2a2a2;border-radius:2.5px;"></div>
<div style="left:2100.0px;top:393.0px;width:17.2px;height:4.0px;background:#a4a4a4;"></div>
<div style="left:881.5px;top:429.0px;width:220.5px;height:628.0px;background:#f6f6f6;"></div>
<div style="left:881.5px;top:472.0px;width:220.5px;height:38.5px;background:#dcdde0;"></div>
<div style="left:1118.5px;top:489.0px;width:1008.0px;height:3.0px;background:#dedede;"></div>
<div style="left:1118.5px;top:487.0px;width:72.9px;height:5.0px;background:#3e9cc6;border-radius:1px;"></div>
<div style="left:1195.2px;top:459.0px;width:1.2px;height:22.0px;background:#d4d4d4;"></div>
<div style="left:1118.5px;top:504.5px;width:1008.0px;height:546.0px;background:#fff;border:1.5px solid #d2d2d2;"></div>
<svg style="left:1122px;top:510px" width="30" height="30" viewBox="0 0 30 30"><circle cx="12.6" cy="13.4" r="9" fill="none" stroke="#6a6a6a" stroke-width="1.6"/><path d="M19 20L26 27.5" stroke="#6a6a6a" stroke-width="1.8" stroke-linecap="round"/></svg>
<div style="left:1153.7px;top:509.3px;width:900.6px;height:31.3px;background:#fff;border:1.5px solid #d3d3d3;border-radius:16px;box-shadow:inset 0 2px 2.5px rgba(0,0,0,.14);"></div>
<svg style="left:2058px;top:514px" width="60" height="26" viewBox="0 0 60 26"><path d="M2.500 13.500h21.500M13.800 3.300l10.500 10.200-10.500 10.500" fill="none" stroke="#5b5b5b" stroke-width="1.7"/><path d="M38 3.5l18 19M56 3.5l-18 19" fill="none" stroke="#5b5b5b" stroke-width="1.7"/></svg>
<div style="left:1120.0px;top:543.5px;width:1005.0px;height:102.5px;background:#ededed;border-bottom:2px solid #cfcfcf;border-top:1px solid #e2e2e2;"></div>
<div style="left:1159.0px;top:545.0px;width:2.0px;height:99.0px;background:#cfcfcf;"></div>
<div style="left:1264.0px;top:545.0px;width:2.0px;height:99.0px;background:#cfcfcf;"></div>
<div style="left:1370.0px;top:545.0px;width:2.0px;height:99.0px;background:#cfcfcf;"></div>
<div style="left:1476.0px;top:545.0px;width:2.0px;height:99.0px;background:#cfcfcf;"></div>
<div style="left:1581.0px;top:587.0px;width:2.0px;height:57.0px;background:#cfcfcf;"></div>
<div style="left:1687.0px;top:545.0px;width:2.0px;height:99.0px;background:#cfcfcf;"></div>
<div style="left:1792.0px;top:545.0px;width:2.0px;height:99.0px;background:#cfcfcf;"></div>
<div style="left:1898.0px;top:545.0px;width:2.0px;height:99.0px;background:#cfcfcf;"></div>
<div style="left:2004.0px;top:545.0px;width:2.0px;height:99.0px;background:#cfcfcf;"></div>
<div style="left:2109.0px;top:545.0px;width:2.0px;height:99.0px;background:#cfcfcf;"></div>
<div style="left:1476.6px;top:585.0px;width:211.2px;height:2.0px;background:#cfcfcf;"></div>
<div style="left:1120.0px;top:698.7px;width:990.5px;height:53.7px;background:#f1f5f9;"></div>
<div style="left:1120.0px;top:699.0px;width:990.5px;height:1.0px;background:#e6e6e6;"></div>
<div style="left:1120.0px;top:752.0px;width:990.5px;height:1.0px;background:#e6e6e6;"></div>
<div style="left:1120.0px;top:806.0px;width:990.5px;height:1.0px;background:#e6e6e6;"></div>
<div style="left:1159.5px;top:646.0px;width:1.0px;height:160.0px;background:#dfdfdf;"></div>
<div style="left:1264.5px;top:646.0px;width:1.0px;height:160.0px;background:#dfdfdf;"></div>
<div style="left:1370.5px;top:646.0px;width:1.0px;height:160.0px;background:#dfdfdf;"></div>
<div style="left:1476.5px;top:646.0px;width:1.0px;height:160.0px;background:#dfdfdf;"></div>
<div style="left:1581.5px;top:646.0px;width:1.0px;height:160.0px;background:#dfdfdf;"></div>
<div style="left:1687.5px;top:646.0px;width:1.0px;height:160.0px;background:#dfdfdf;"></div>
<div style="left:1792.5px;top:646.0px;width:1.0px;height:160.0px;background:#dfdfdf;"></div>
<div style="left:1898.5px;top:646.0px;width:1.0px;height:160.0px;background:#dfdfdf;"></div>
<div style="left:2004.5px;top:646.0px;width:1.0px;height:160.0px;background:#dfdfdf;"></div>
<div style="left:2109.5px;top:646.0px;width:1.0px;height:160.0px;background:#dfdfdf;"></div>
<span class="cb cb-dh" style="left:1129.3px;top:614.5px"></span>
<span class="cb cb-d" style="left:1129.3px;top:654.2px"></span>
<span class="cb cb-d" style="left:1129.3px;top:707.4px"></span>
<span class="cb cb-d" style="left:1129.3px;top:761.1px"></span>
<div style="left:1120.0px;top:1008.0px;width:1005.0px;height:41.5px;background:#f6f6f6;border-top:1.5px solid #dedede;"></div>
<svg style="left:1127px;top:1017px" width="27" height="27" viewBox="0 0 27 27"><circle cx="13.3" cy="13.3" r="10.8" fill="none" stroke="#4a8fa8" stroke-width="1.5"/><path d="M13.3 7.5v11.6M7.5 13.3h11.6" stroke="#4a8fa8" stroke-width="1.5"/></svg>
<svg style="left:1211px;top:1017px" width="27" height="27" viewBox="0 0 27 27"><circle cx="13.3" cy="13.3" r="10.8" fill="none" stroke="#f0c4c8" stroke-width="1.5"/><path d="M7.5 13.3h11.6" stroke="#f0c4c8" stroke-width="1.5"/></svg>
<svg style="left:1315px;top:1017px" width="27" height="27" viewBox="0 0 27 27"><circle cx="13.3" cy="13.3" r="10.8" fill="none" stroke="#bcdde8" stroke-width="1.5"/><rect x="7.5" y="8" width="8" height="7" rx="1.5" fill="none" stroke="#bcdde8" stroke-width="1.4"/><rect x="11" y="11.5" width="8" height="7" rx="1.5" fill="#fff" stroke="#bcdde8" stroke-width="1.4"/></svg>
<div style="left:1880.7px;top:1089.5px;width:118.0px;height:44.0px;background:#3c9be0;border-radius:22px;"></div>
<div style="left:2008.5px;top:1089.5px;width:117.1px;height:44.0px;background:#fff;border:1.5px solid #d0d0d0;border-radius:22px;"></div>
<span class="t" style="left:900.6px;top:387.6px;font-size:24.3px;color:#1c1c1c;transform:scaleX(1.058);">Virtual Router - untrust-vr</span>
<span class="t" style="left:899.8px;top:441.7px;font-size:18.3px;color:#6b6b6b;transform:scaleX(0.994);">Router Settings</span>
<span class="t" style="left:897.7px;top:482.9px;font-size:18.3px;color:#333;font-weight:700;transform:scaleX(0.948);">Static Routes</span>
<span class="t" style="left:899.8px;top:524.0px;font-size:18.3px;color:#6b6b6b;transform:scaleX(1.033);">Redistribution Profile</span>
<span class="t" style="left:899.8px;top:566.0px;font-size:18.3px;color:#6b6b6b;transform:scaleX(0.892);">RIP</span>
<span class="t" style="left:899.8px;top:608.5px;font-size:18.3px;color:#6b6b6b;transform:scaleX(0.908);">OSPF</span>
<span class="t" style="left:899.8px;top:651.5px;font-size:18.3px;color:#6b6b6b;transform:scaleX(0.958);">OSPFv3</span>
<span class="t" style="left:899.8px;top:694.0px;font-size:18.3px;color:#6b6b6b;transform:scaleX(0.938);">BGP</span>
<span class="t" style="left:899.8px;top:736.5px;font-size:18.3px;color:#6b6b6b;transform:scaleX(1.056);">Multicast</span>
<span class="t" style="left:1136.2px;top:459.2px;font-size:18.3px;color:#333;font-weight:700;transform:scaleX(0.978);">IPv4</span>
<span class="t" style="left:1212.4px;top:459.2px;font-size:18.3px;color:#666;transform:scaleX(0.981);">IPv6</span>
<span class="t" style="left:1983.0px;top:517.4px;font-size:17px;color:#333;transform:scaleX(1.009);">3 items</span>
<span class="t" style="left:1546.3px;top:557.9px;font-size:17.2px;color:#666;transform:scaleX(1.017);">Next Hop</span>
<span class="t" style="left:1168.9px;top:619.2px;font-size:15.5px;color:#333;font-weight:700;letter-spacing:1.2px;transform:scaleX(0.969);">NAME</span>
<span class="t" style="left:1274.8px;top:619.2px;font-size:15.5px;color:#333;font-weight:700;letter-spacing:1.2px;transform:scaleX(0.911);">DESTINA...</span>
<span class="t" style="left:1380.0px;top:619.2px;font-size:15.5px;color:#333;font-weight:700;letter-spacing:1.2px;transform:scaleX(0.900);">INTERFA...</span>
<span class="t" style="left:1486.0px;top:619.2px;font-size:15.5px;color:#333;font-weight:700;letter-spacing:1.2px;transform:scaleX(0.891);">TYPE</span>
<span class="t" style="left:1591.0px;top:619.2px;font-size:15.5px;color:#333;font-weight:700;letter-spacing:1.2px;transform:scaleX(0.925);">VALUE</span>
<span class="t" style="left:1696.7px;top:597.2px;font-size:15.5px;color:#333;font-weight:700;letter-spacing:1.2px;transform:scaleX(1.018);">ADMIN</span>
<span class="t" style="left:1696.7px;top:619.2px;font-size:15.5px;color:#333;font-weight:700;letter-spacing:1.2px;transform:scaleX(0.928);">DISTANCE</span>
<span class="t" style="left:1802.3px;top:619.2px;font-size:15.5px;color:#333;font-weight:700;letter-spacing:1.2px;transform:scaleX(0.946);">METRIC</span>
<span class="t" style="left:1908.0px;top:619.2px;font-size:15.5px;color:#333;font-weight:700;letter-spacing:1.2px;transform:scaleX(0.910);">BFD</span>
<span class="t" style="left:2013.6px;top:597.2px;font-size:15.5px;color:#333;font-weight:700;letter-spacing:1.2px;transform:scaleX(0.933);">ROUTE</span>
<span class="t" style="left:2013.6px;top:619.2px;font-size:15.5px;color:#333;font-weight:700;letter-spacing:1.2px;transform:scaleX(0.886);">TABLE</span>
<span class="t" style="left:1168.9px;top:657.1px;font-size:17.2px;color:#1f1f1f;transform:scaleX(1.048);">route-for-</span>
<span class="t" style="left:1168.9px;top:674.3px;font-size:17.2px;color:#1f1f1f;transform:scaleX(0.972);">10.x</span>
<span class="t" style="left:1274.8px;top:657.1px;font-size:17.2px;color:#1f1f1f;transform:scaleX(1.036);">10.0.0.0/8</span>
<span class="t" style="left:1486.0px;top:657.1px;font-size:17.2px;color:#1f1f1f;transform:scaleX(1.028);">next-vr</span>
<span class="t" style="left:1591.0px;top:657.1px;font-size:17.2px;color:#1f1f1f;transform:scaleX(1.055);">trust-vr</span>
<span class="t" style="left:1696.7px;top:657.1px;font-size:17.2px;color:#1f1f1f;transform:scaleX(1.019);">default</span>
<span class="t" style="left:1802.3px;top:657.1px;font-size:17.2px;color:#1f1f1f;transform:scaleX(1.041);">10</span>
<span class="t" style="left:1908.0px;top:657.1px;font-size:17.2px;color:#1f1f1f;transform:scaleX(0.983);">None</span>
<span class="t" style="left:2013.6px;top:657.1px;font-size:17.2px;color:#1f1f1f;transform:scaleX(0.979);">unicast</span>
<span class="t" style="left:1168.9px;top:710.8px;font-size:17.2px;color:#1f1f1f;transform:scaleX(1.048);">route-for-</span>
<span class="t" style="left:1168.9px;top:728.0px;font-size:17.2px;color:#1f1f1f;transform:scaleX(0.987);">172.16.x</span>
<span class="t" style="left:1274.8px;top:710.8px;font-size:17.2px;color:#1f1f1f;transform:scaleX(0.985);">172.16.0....</span>
<span class="t" style="left:1486.0px;top:710.8px;font-size:17.2px;color:#1f1f1f;transform:scaleX(1.028);">next-vr</span>
<span class="t" style="left:1591.0px;top:710.8px;font-size:17.2px;color:#1f1f1f;transform:scaleX(1.055);">trust-vr</span>
<span class="t" style="left:1696.7px;top:710.8px;font-size:17.2px;color:#1f1f1f;transform:scaleX(1.019);">default</span>
<span class="t" style="left:1802.3px;top:710.8px;font-size:17.2px;color:#1f1f1f;transform:scaleX(1.041);">10</span>
<span class="t" style="left:1908.0px;top:710.8px;font-size:17.2px;color:#1f1f1f;transform:scaleX(0.983);">None</span>
<span class="t" style="left:2013.6px;top:710.8px;font-size:17.2px;color:#1f1f1f;transform:scaleX(0.979);">unicast</span>
<span class="t" style="left:1168.9px;top:764.5px;font-size:17.2px;color:#1f1f1f;transform:scaleX(1.048);">route-for-</span>
<span class="t" style="left:1168.9px;top:781.7px;font-size:17.2px;color:#1f1f1f;transform:scaleX(1.015);">192.168</span>
<span class="t" style="left:1274.8px;top:764.5px;font-size:17.2px;color:#1f1f1f;transform:scaleX(0.987);">192.168....</span>
<span class="t" style="left:1486.0px;top:764.5px;font-size:17.2px;color:#1f1f1f;transform:scaleX(1.028);">next-vr</span>
<span class="t" style="left:1591.0px;top:764.5px;font-size:17.2px;color:#1f1f1f;transform:scaleX(1.055);">trust-vr</span>
<span class="t" style="left:1696.7px;top:764.5px;font-size:17.2px;color:#1f1f1f;transform:scaleX(1.019);">default</span>
<span class="t" style="left:1802.3px;top:764.5px;font-size:17.2px;color:#1f1f1f;transform:scaleX(1.041);">10</span>
<span class="t" style="left:1908.0px;top:764.5px;font-size:17.2px;color:#1f1f1f;transform:scaleX(0.983);">None</span>
<span class="t" style="left:2013.6px;top:764.5px;font-size:17.2px;color:#1f1f1f;transform:scaleX(0.979);">unicast</span>
<span class="t" style="left:1157.7px;top:1022.9px;font-size:17.8px;color:#333;transform:scaleX(1.037);-webkit-text-stroke:0.3px;">Add</span>
<span class="t" style="left:1241.3px;top:1022.9px;font-size:17.8px;color:#c2c2c2;transform:scaleX(1.033);-webkit-text-stroke:0.3px;">Delete</span>
<span class="t" style="left:1345.2px;top:1022.9px;font-size:17.8px;color:#c2c2c2;-webkit-text-stroke:0.3px;">Clone</span>
<span class="t" style="left:1926.5px;top:1104.7px;font-size:17.5px;color:#fff;font-weight:700;transform:scaleX(0.990);">OK</span>
<span class="t" style="left:2042.0px;top:1104.7px;font-size:17.5px;color:#444;transform:scaleX(0.932);">Cancel</span>
<svg style="left:1192px;top:776px" width="76" height="84" viewBox="1192 776 76 84"><path d="M1213.200 797C1212.300 791 1215 788.600 1218 788.800C1221 789 1222.600 792 1223.100 796L1225.700 812C1225.600 803 1234.800 801.500 1235.600 812.500C1236 803.500 1245 803.500 1246 813.500C1246.500 806.500 1254 807 1254.600 814C1255.500 820 1254 826 1251.500 831C1249.500 835 1246.200 838 1245.500 840.500L1244.800 845.800C1241 846.500 1239.500 842 1237.500 840.500C1234 843.500 1228 846.800 1222 845.800L1220.500 842.500C1216 838 1212.500 832.500 1209 827C1206 822.500 1201.800 819.500 1202 816C1202.500 811.800 1208 812 1211 815.200L1216.500 821Z" fill="#fff" stroke="#1c1c1c" stroke-width="3" stroke-linejoin="round" style="filter:drop-shadow(0.5px 1.500px 1.500px rgba(0,0,0,.35))"/><path d="M1228.400 822v13M1235.500 822v13M1242.600 822v13" stroke="#2a2a2a" stroke-width="2.700" stroke-linecap="round"/></svg>
</div>
</body></html>
